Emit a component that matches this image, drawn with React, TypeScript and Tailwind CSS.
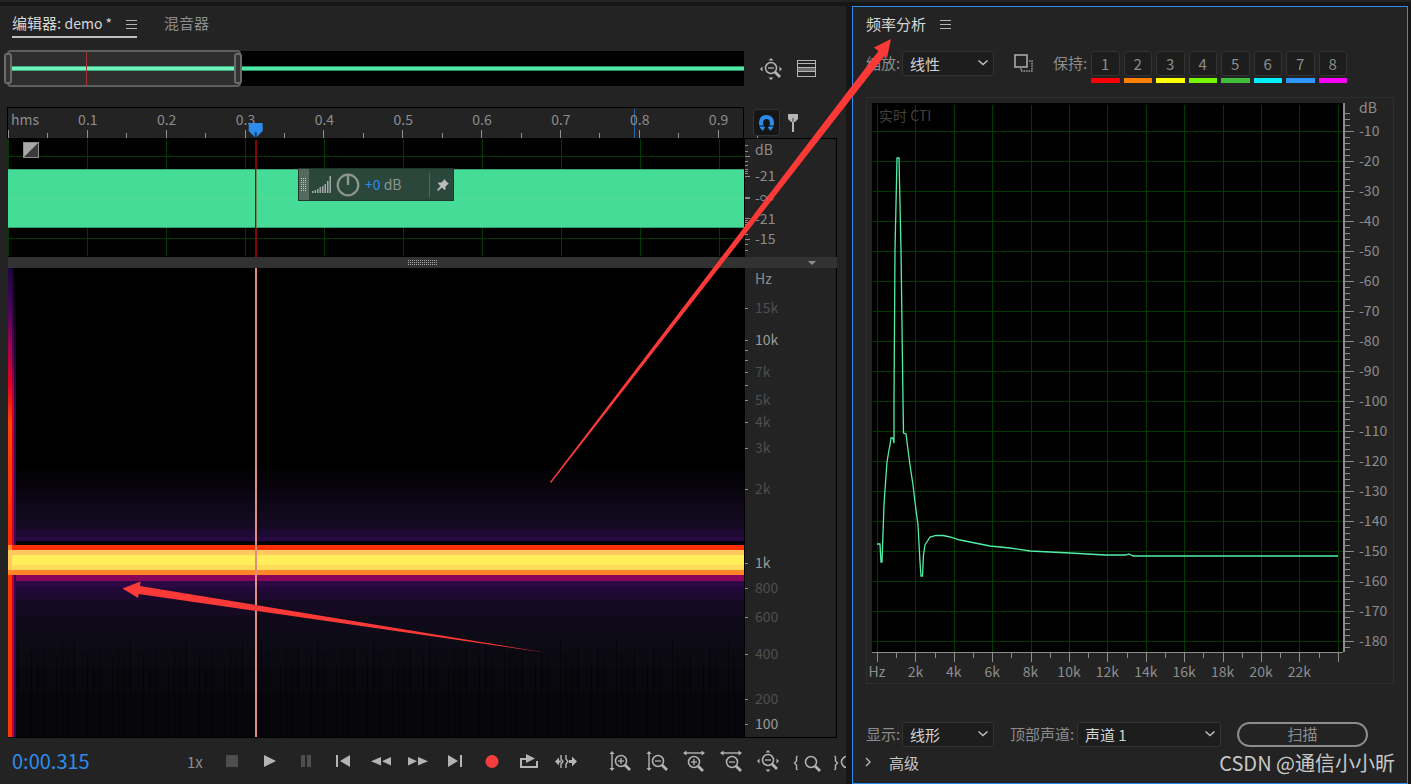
import React, { useState } from 'react';

const pct = (value: number, total: number) => `${(value / total) * 100}%`;
const range = (n: number) => Array.from({ length: n }, (_, i) => i);

const HOLDS = [
  { label: '1', color: 'bg-[#ff0000]' },
  { label: '2', color: 'bg-[#ff8000]' },
  { label: '3', color: 'bg-[#ffff00]' },
  { label: '4', color: 'bg-[#76f500]' },
  { label: '5', color: 'bg-[#40bf3a]' },
  { label: '6', color: 'bg-[#00f0ff]' },
  { label: '7', color: 'bg-[#2d96ff]' },
  { label: '8', color: 'bg-[#ff00ff]' },
];

const DB_MARKS = [
  { text: 'dB', y: 11 },
  { text: '-21', y: 37 },
  { text: '-∞', y: 59 },
  { text: '-21', y: 80 },
  { text: '-15', y: 100 },
];

const HZ_MARKS = [
  { text: 'Hz', y: 11, tone: 'fill-[#8c8c8c]' },
  { text: '15k', y: 40, tone: 'fill-[#4e4e4e]' },
  { text: '10k', y: 72, tone: 'fill-[#9a9a9a]' },
  { text: '7k', y: 104, tone: 'fill-[#4e4e4e]' },
  { text: '5k', y: 132, tone: 'fill-[#4e4e4e]' },
  { text: '4k', y: 154, tone: 'fill-[#4e4e4e]' },
  { text: '3k', y: 180, tone: 'fill-[#4e4e4e]' },
  { text: '2k', y: 221, tone: 'fill-[#4e4e4e]' },
  { text: '1k', y: 295, tone: 'fill-[#9a9a9a]' },
  { text: '800', y: 320, tone: 'fill-[#4e4e4e]' },
  { text: '600', y: 349, tone: 'fill-[#4e4e4e]' },
  { text: '400', y: 386, tone: 'fill-[#4e4e4e]' },
  { text: '200', y: 431, tone: 'fill-[#4e4e4e]' },
  { text: '100', y: 456, tone: 'fill-[#9a9a9a]' },
];

// [top, height, colour] in a 469 unit tall plot
const BANDS: [number, number, string][] = [
  [252, 9, '#150a22'],
  [261, 8, '#1d0a32'],
  [269, 4, '#280a42'],
  [273, 4, '#06030b'],
  [277, 5, '#ff3000'],
  [282, 5, '#ffc95f'],
  [287, 10, '#ffed5a'],
  [297, 5, '#ffdb5a'],
  [302, 5, '#ff8528'],
  [307, 6, '#88055a'],
  [313, 6, '#2c0846'],
  [319, 6, '#220838'],
  [325, 7, '#1c0a2e'],
  [332, 15, '#150a22'],
  [347, 16, '#0f0a1a'],
  [363, 18, '#0d0b15'],
  [381, 20, '#0b0a12'],
  [401, 22, '#09080e'],
  [423, 46, '#07060b'],
];

const SPECTRUM =
  'M5 441H8L9 459H10L12 402L13 387L15 359L17 347L18 342L19 335H21L22 340L22 297L23 147L25 55H27L29 147L31 297L31.500 330L34 331L36 347L38 362L41 382L43 399L46 422L48 459L49 473H50.500L51.500 452L53 442L58 434L64 432.300L71 432.500L78 434L88 437L103 440L118 443L138 445L158 448L178 449L198 450L233 452H254L257 451L261 453H466';

function MenuIcon() {
  return (
    <svg width="11" height="10" viewBox="0 0 11 10" className="fill-[#b4b4b4]">
      <path d="M0 0h11v1H0zM0 4h11v1H0zM0 8h11v1H0z" />
    </svg>
  );
}

interface IconProps {
  children: React.ReactNode;
  label: string;
}

function ToolButton({ children, label }: IconProps) {
  return (
    <button aria-label={label} className="flex h-8 w-[37px] shrink-0 items-center justify-center text-[#b4b4b4]">
      <svg width="24" height="24" viewBox="0 0 24 24" fill="currentColor" className="overflow-visible">
        {children}
      </svg>
    </button>
  );
}

function Lens({ x, y, sign }: { x: number; y: number; sign?: 'plus' | 'minus' }) {
  return (
    <g stroke="currentColor" fill="none">
      <circle cx={x} cy={y} r="5.500" strokeWidth="1.500" />
      <path d={`M${x + 4} ${y + 4}l5 5`} strokeWidth="2.800" />
      {sign && <path d={`M${x - 3} ${y}h6`} strokeWidth="1.300" />}
      {sign === 'plus' && <path d={`M${x} ${y - 3}v6`} strokeWidth="1.300" />}
    </g>
  );
}

function ZoomFull() {
  return (
    <>
      <Lens x={12} y={11} sign="minus" />
      <path d="M12 1l2.500 2.500h-5zM12 23l2.500-2.500h-5zM1 12l2.500-2.500v5zM23 12l-2.500-2.500v5z" />
    </>
  );
}

function VerticalSpan() {
  return (
    <>
      <path d="M3.300 4.500h1.400v15H3.300z" />
      <path d="M4 2l2.500 3h-5z" />
      <path d="M4 22l2.500-3h-5z" />
    </>
  );
}

function HorizontalSpan() {
  return (
    <>
      <path d="M4 3.300h16v1.400H4z" />
      <path d="M1 4l3.500-2.500v5z" />
      <path d="M23 4l-3.500-2.500v5z" />
    </>
  );
}

function Select({ id, options, width }: { id: string; options: string[]; width: string }) {
  return (
    <span className={`relative inline-flex ${width}`}>
      <select
        id={id}
        className="h-[25px] w-full appearance-none rounded-[3px] border border-[#333] bg-[#1d1d1d] pl-[7px] text-[15px] leading-[22px] text-[#d2d2d2]"
      >
        {options.map((o) => (
          <option key={o}>{o}</option>
        ))}
      </select>
      <svg width="10" height="6" viewBox="0 0 10 6" className="pointer-events-none absolute right-[6px] top-[9px]">
        <path d="M0.500 0.500L5 4.500L9.500 0.500" fill="none" stroke="#c0c0c0" strokeWidth="1.400" />
      </svg>
    </span>
  );
}

function Overview() {
  return (
    <div className="relative h-[35px] bg-black">
      <div className="absolute inset-x-0 top-[15px] h-[5px] border-y border-[#2a8f62] bg-[#4fe8a4]" />
      {/* Visible range */}
      <div className="absolute -left-px -top-px h-[37px] w-[31.800%] rounded-[4px] border-2 border-[#5f5f5f] bg-[#2e2e2e]">
        <div className="absolute inset-x-0 top-[14px] h-[5px] border-y border-[#3fae80] bg-[#70f2b8]" />
        <div className="absolute inset-y-0 left-1/3 w-px bg-[#a83030]" />
        <div className="absolute -left-[5px] top-px h-[31px] w-2 rounded-[3px] border-2 border-[#6a6a6a] bg-[#333]" />
        <div className="absolute -right-[3px] top-px h-[31px] w-2 rounded-[3px] border-2 border-[#6a6a6a] bg-[#333]" />
      </div>
    </div>
  );
}

function TimeRuler() {
  return (
    <svg className="block h-full w-full overflow-visible">
      <g shapeRendering="crispEdges" stroke="#909090">
        {range(10).map((i) => (
          <React.Fragment key={i}>
            <line x1={pct(i * 78.95 + 0.5, 736)} x2={pct(i * 78.95 + 0.5, 736)} y1="22" y2="30" />
            <line x1={pct(i * 78.95 + 40, 736)} x2={pct(i * 78.95 + 40, 736)} y1="25" y2="30" />
          </React.Fragment>
        ))}
        <line x1="85.200%" x2="85.200%" y1="1" y2="30" stroke="#2468a8" />
      </g>
      <g className="fill-[#8c8c8c] text-[14px]">
        <text x="3" y="17">hms</text>
        {range(9).map((i) => (
          <text key={i} x={pct((i + 1) * 78.95 + 1, 736)} y="17" textAnchor="middle">
            {`0.${i + 1}`}
          </text>
        ))}
      </g>
      <svg x="33.700%" y="15" width="16" height="16" className="overflow-visible">
        <path d="M-7 0h14v8l-6 6h-2l-6-6z" fill="#2d8ceb" />
        <path d="M0 9v5" stroke="#12406e" strokeWidth="2" />
      </svg>
    </svg>
  );
}

function GainHud() {
  return (
    <div className="absolute left-[39.4%] top-[29px] flex h-[33px] w-[156px] items-center border border-[#22382f] bg-[#2b473c]">
      <div className="flex h-full w-[10px] shrink-0 items-center justify-center bg-[#56695f]">
        <svg width="5" height="13" fill="none" stroke="#c4c4c4" strokeDasharray="1 1">
          <path d="M0.500 0v13M2.500 0v13M4.500 0v13" />
        </svg>
      </div>
      <svg width="20" height="19" viewBox="0 0 20 19" className="ml-[3px] fill-[#a2a9a5]">
        {[2, 3, 4, 6, 7, 9, 12, 17].map((h, i) => (
          <rect key={i} x={i * 2.5} y={18 - h} width="1.500" height={h} />
        ))}
      </svg>
      <svg width="24" height="24" viewBox="0 0 24 24" fill="none" stroke="#8e9692" strokeWidth="2.200" className="ml-1">
        <circle cx="12" cy="12" r="10.300" />
        <path d="M12 2v10" strokeWidth="2.400" />
      </svg>
      <span className="ml-[5px] pb-0.5 text-[14px] text-[#8a9690]">
        <span className="text-[#2d8ceb]">+0</span> dB
      </span>
      <span className="ml-auto h-6 w-px bg-[#54685f]" />
      <svg width="12" height="12" viewBox="0 0 12 12" className="ml-[7px] mr-[4px] shrink-0 fill-[#bcbcbc]">
        <path d="M7 0l5 5-1.500 0.500-2 2 0 3-1 0.500-2.500-2.500L1 12 0 11l3.500-4L1 4.500 1.500 3.500h3l2-2z" />
      </svg>
    </div>
  );
}

function Waveform() {
  return (
    <div className="relative h-full">
      <svg className="block h-full w-full bg-black" shapeRendering="crispEdges">
        <g stroke="#003a00">
          {range(10).map((i) => (
            <line key={i} x1={pct(i * 78.95 + 0.5, 736)} x2={pct(i * 78.95 + 0.5, 736)} y1="0" y2="117" />
          ))}
          <line x1="0" x2="100%" y1="17.500" y2="17.500" />
          <line x1="0" x2="100%" y1="99.500" y2="99.500" />
        </g>
        <rect x="0" y="30" width="100%" height="59" fill="#45dc98" />
        <rect x="0" y="30" width="100%" height="1" fill="#35a878" />
        <rect x="0" y="88" width="100%" height="1" fill="#2f9c6c" />
        <rect x="0" y="59" width="100%" height="1" fill="#55dc94" />
        <rect x="33.600%" y="1" width="2" height="117" fill="#8a0404" />
        <rect x="33.720%" y="30" width="1" height="59" fill="#6d8a5c" />
      </svg>
      <svg width="16" height="16" className="absolute left-[15px] top-[3px]">
        <rect x="0.500" y="0.500" width="15" height="15" fill="#3a3a3a" stroke="#8c8c8c" />
        <path d="M1 1h14L1 15z" fill="#a8a8a8" />
      </svg>
      <GainHud />
    </div>
  );
}

function DbScale() {
  return (
    <svg className="block h-full w-full text-[14px]">
      <g shapeRendering="crispEdges" fill="#8c8c8c">
        {[6, 12, 22, 26, 30, 32, 34, 81, 83, 85, 95, 105, 111].map((y) => (
          <rect key={y} x="0" y={y} width="3" height="1" />
        ))}
        {[17, 37, 79, 100].map((y) => (
          <rect key={y} x="0" y={y} width="5" height="1" />
        ))}
        <rect x="0" y="58" width="5" height="2" />
      </g>
      {DB_MARKS.map((m) => (
        <text key={m.y} x="10" y={m.y + 5} className="fill-[#8c8c8c]">
          {m.text}
        </text>
      ))}
    </svg>
  );
}

function Spectrogram() {
  return (
    <svg className="block h-full w-full bg-black" viewBox="0 0 736 469" preserveAspectRatio="none">
      <defs>
        <linearGradient id="haze" x1="0" y1="0" x2="0" y2="1">
          <stop offset="0" stopColor="#000" />
          <stop offset="1" stopColor="#130a20" />
        </linearGradient>
        <linearGradient id="edgeHot" x1="0" y1="0" x2="0" y2="1">
          <stop offset="0" stopColor="#1c0640" />
          <stop offset="0.150" stopColor="#4a0660" />
          <stop offset="0.280" stopColor="#a00050" />
          <stop offset="0.420" stopColor="#e00020" />
          <stop offset="0.560" stopColor="#ff4400" />
          <stop offset="1" stopColor="#ff2c00" />
        </linearGradient>
        <linearGradient id="edgeMid" x1="0" y1="0" x2="0" y2="1">
          <stop offset="0" stopColor="#10022a" />
          <stop offset="0.300" stopColor="#4a0650" />
          <stop offset="0.500" stopColor="#d00028" />
          <stop offset="1" stopColor="#c80030" />
        </linearGradient>
        <linearGradient id="edgeCool" x1="0" y1="0" x2="0" y2="1">
          <stop offset="0" stopColor="#000" />
          <stop offset="0.500" stopColor="#3c0850" />
          <stop offset="1" stopColor="#3c0850" />
        </linearGradient>
      </defs>
      <g shapeRendering="crispEdges">
        <rect x="0" y="197" width="736" height="55" fill="url(#haze)" />
        <rect x="0" y="0" width="4" height="469" fill="url(#edgeHot)" />
        {BANDS.map(([y, h, fill]) => (
          <rect key={y} x="0" y={y} width="736" height={h} fill={fill} />
        ))}
        {range(90).map((i) => (
          <rect key={i} x={10 + i * 8 + ((i * 5) % 7)} y={370 + ((i * 13) % 30)} width="1" height="99" fill="#000" opacity="0.450" />
        ))}
        <rect x="0" y="0" width="4" height="277" fill="url(#edgeHot)" />
        <rect x="4" y="0" width="2" height="277" fill="url(#edgeMid)" />
        <rect x="6" y="0" width="2" height="277" fill="url(#edgeCool)" />
        <rect x="0" y="277" width="4" height="30" fill="#ff8a30" />
        <rect x="0" y="282" width="4" height="20" fill="#ffc95f" />
        <rect x="0" y="307" width="4" height="162" fill="#ff3800" />
        <rect x="4" y="307" width="2" height="162" fill="#c80030" />
        <rect x="6" y="307" width="2" height="162" fill="#3c0850" />
        <rect x="247" y="0" width="2" height="469" fill="#e08c80" />
      </g>
    </svg>
  );
}

function HzScale() {
  return (
    <svg className="block h-full w-full text-[14px]">
      <g shapeRendering="crispEdges" fill="#8c8c8c">
        {[82, 92, 117, ...HZ_MARKS.slice(1).map((m) => m.y)].map((y) => (
          <rect key={y} x="0" y={pct(y, 469)} width="3" height="1" />
        ))}
      </g>
      {HZ_MARKS.map((m) => (
        <text key={m.text} x="10" y={pct(m.y, 469)} dy="5" className={m.tone}>
          {m.text}
        </text>
      ))}
    </svg>
  );
}

function Transport() {
  return (
    <div className="flex h-[46px] shrink-0 items-center overflow-hidden pl-3">
      <span className="w-[175px] shrink-0 text-[20px] text-[#2d8ceb]">0:00.315</span>
      <span className="w-[26px] shrink-0 text-[15px] text-[#8c8c8c]">1x</span>
      <ToolButton label="停止">
        <rect x="6" y="6" width="12" height="12" fill="#4e4e4e" />
      </ToolButton>
      <ToolButton label="播放">
        <path d="M7 6l12 6-12 6z" />
      </ToolButton>
      <ToolButton label="暂停">
        <path d="M7 6h4v12H7zM13 6h4v12h-4z" fill="#4e4e4e" />
      </ToolButton>
      <ToolButton label="移到上一个">
        <path d="M5 6h2v12H5zM19 6v12l-10-6z" />
      </ToolButton>
      <ToolButton label="快退">
        <path d="M13 8v8.500L3 12.200zM23 8v8.500l-9-4.300z" />
      </ToolButton>
      <ToolButton label="快进">
        <path d="M3 8v8.500l9-4.300zM13 8v8.500l10-4.300z" />
      </ToolButton>
      <ToolButton label="移到下一个">
        <path d="M6 6l10 6-10 6zM18 6h2v12h-2z" />
      </ToolButton>
      <ToolButton label="录制">
        <circle cx="13" cy="12.500" r="6.500" fill="#f53d3d" />
      </ToolButton>
      <ToolButton label="循环播放">
        <path d="M4 9h7v2H6v6h14v-5h2v7H4z" />
        <path d="M10 5l9 4.500-9 4.500z" />
      </ToolButton>
      <ToolButton label="跳过所选项目">
        <path d="M2 12.500l4-4v3h2v2H6v3z" />
        <path d="M24 12.500l-5-5v3.500h-3v3h3v3.500z" />
        <path d="M8 6v4l2 2.500-2 2.500v4M13 6v4l2 2.500-2 2.500v4" fill="none" stroke="currentColor" strokeWidth="1.400" />
      </ToolButton>
      <div className="ml-[18px] flex shrink-0">
        <ToolButton label="放大振幅">
          <Lens x={13} y={12} sign="plus" />
          <VerticalSpan />
        </ToolButton>
        <ToolButton label="缩小振幅">
          <Lens x={13} y={12} sign="minus" />
          <VerticalSpan />
        </ToolButton>
        <ToolButton label="放大时间">
          <Lens x={12} y={13} sign="plus" />
          <HorizontalSpan />
        </ToolButton>
        <ToolButton label="缩小时间">
          <Lens x={13} y={13} sign="minus" />
          <HorizontalSpan />
        </ToolButton>
        <ToolButton label="全部缩小">
          <ZoomFull />
        </ToolButton>
        <ToolButton label="放大入点">
          <Lens x={18} y={13} />
          <path d="M4.500 7l-1 1v4l-2 2 2 2v4l1 1" fill="none" stroke="currentColor" strokeWidth="1.400" />
        </ToolButton>
        <ToolButton label="放大出点">
          <path d="M4.500 7l1 1v4l2 2-2 2v4l-1 1" fill="none" stroke="currentColor" strokeWidth="1.400" />
          <Lens x={17} y={13} />
        </ToolButton>
      </div>
    </div>
  );
}

function EditorPanel() {
  return (
    <section className="flex min-h-0 min-w-0 flex-col overflow-hidden bg-[#232323]">
      <header className="flex h-8 shrink-0 pl-3 text-[15px]">
        <div className="flex items-center gap-[14px] border-b-2 border-[#c0c0c0] pt-[3px]">
          <button className="text-[#d8d8d8]">
            编辑器: <span className="text-[14px]">demo *</span>
          </button>
          <button aria-label="编辑器菜单" className="pt-1">
            <MenuIcon />
          </button>
        </div>
        <button className="ml-[27px] pt-px text-[#8c8c8c]">混音器</button>
      </header>

      <div className="mt-[13px] grid shrink-0 grid-cols-[1fr_93px] pl-2 pr-[9px]">
        <Overview />
        <div className="flex items-center gap-[14px] pl-[15px] text-[#b4b4b4]">
          <button aria-label="缩放导航">
            <svg width="24" height="24" viewBox="0 0 24 24" fill="currentColor">
              <ZoomFull />
            </svg>
          </button>
          <button aria-label="显示列表">
            <svg width="19" height="17" viewBox="0 0 19 17" fill="none" stroke="currentColor" shapeRendering="crispEdges">
              <path d="M1 8h17v3H1z" fill="#6a6a6a" stroke="none" />
              <rect x="0.500" y="0.500" width="18" height="16" />
              <path d="M1 3.500h17M1 7.500h17M1 11.500h17" />
            </svg>
          </button>
        </div>
      </div>

      <div className="mt-[21px] grid min-h-0 flex-1 grid-cols-[1fr_93px] grid-rows-[32px_118px_11px_1fr] pl-2 pr-[9px]">
        <div className="border-t border-r border-b border-black shadow-[-1px_0_0_#000]">
          <TimeRuler />
        </div>
        <div className="flex items-center gap-[8px] border-b border-black pl-[9px]">
          <button aria-label="对齐" className="flex h-[27px] w-[27px] items-center justify-center rounded-[3px] border border-[#333] bg-[#161616]">
            <svg width="17" height="17" viewBox="0 0 17 17" fill="none" stroke="#2d8ceb" strokeWidth="4">
              <path d="M6 15C1.500 12 2 3 8.500 3s7 9 2.500 12" />
              <path d="M1 12h6M10 12h6" stroke="#161616" strokeWidth="1" />
            </svg>
          </button>
          <button aria-label="添加标记">
            <svg width="10" height="18" viewBox="0 0 10 18" fill="#b4b4b4">
              <path d="M0 0h10v5L7 8H3L0 5zM4 8h2v10H4z" />
              <path d="M5 4v4" stroke="#444" />
            </svg>
          </button>
        </div>

        <Waveform />
        <div className="border-l border-r border-black">
          <DbScale />
        </div>

        <div className="col-span-2 grid grid-cols-[1fr_auto_1fr] items-center bg-[#323232]">
          <svg width="29" height="5" className="col-start-2" fill="none" stroke="#a8a8a8" strokeDasharray="1 1">
            <path d="M0 0.500h29M0 2.500h29M0 4.500h29" />
          </svg>
          <svg width="8" height="4" className="mr-[21px] justify-self-end fill-[#8c8c8c]">
            <path d="M0 0h8L4 4z" />
          </svg>
        </div>

        <div className="min-h-0 border-b border-black">
          <Spectrogram />
        </div>
        <div className="min-h-0 border-b border-l border-r border-black">
          <HzScale />
        </div>
      </div>

      <Transport />
    </section>
  );
}

function FrequencyChart() {
  return (
    <div className="mx-[13px] mt-[14px] grid min-h-0 flex-1 grid-cols-[1fr_50px] grid-rows-[1fr_31px] border border-[#2e2e2e] pl-[5px] pt-[5px]">
      <svg className="block h-full w-full bg-black">
        <g stroke="#003a00" shapeRendering="crispEdges">
          {range(13).map((i) => (
            <line key={i} x1={pct(5.5 + i * 38.4, 471)} x2={pct(5.5 + i * 38.4, 471)} y1="2" y2="100%" />
          ))}
          {range(18).map((i) => (
            <line key={i} x1="1" x2="100%" y1={pct(28.5 + i * 30, 549)} y2={pct(28.5 + i * 30, 549)} />
          ))}
        </g>
        <text x="7" y="18" className="fill-[#404040] text-[14px]">实时 CTI</text>
        <svg width="100%" height="100%" viewBox="0 0 471 549" preserveAspectRatio="none">
          <path d={SPECTRUM} fill="none" stroke="#52eea8" strokeWidth="1.300" />
        </svg>
      </svg>

      {/* Level axis */}
      <svg className="block h-full w-full overflow-visible text-[14px]">
        <g fill="#8c8c8c" shapeRendering="crispEdges">
          <rect x="0" y="0" width="2" height="100%" />
          {range(90).map((i) => (
            <rect key={i} x="2" y={pct(10 + i * 6, 549)} width={i % 5 === 3 ? 9 : 5} height="1" />
          ))}
        </g>
        <text x="16" y="10" className="fill-[#8c8c8c]">dB</text>
        {range(18).map((i) => (
          <text key={i} x="16" y={pct(28 + i * 30, 549)} dy="5" className="fill-[#8c8c8c]">
            {`-${(i + 1) * 10}`}
          </text>
        ))}
      </svg>

      {/* Frequency axis */}
      <svg className="block h-full w-full overflow-visible text-[14px]">
        <g fill="#8c8c8c" shapeRendering="crispEdges">
          <rect x="0" y="0" width="100%" height="1" />
          {range(25).map((i) => (
            <rect key={i} x={pct(5 + i * 19.2, 471)} y="1" width="1" height={i % 2 ? 5 : 9} />
          ))}
        </g>
        {range(12).map((i) => (
          <text key={i} x={pct(5 + i * 38.4, 471)} y="25" textAnchor="middle" className="fill-[#8c8c8c]">
            {i === 0 ? 'Hz' : `${i * 2}k`}
          </text>
        ))}
      </svg>
    </div>
  );
}

function FrequencyPanel() {
  const [hold, setHold] = useState<string | null>(null);

  return (
    <section className="flex min-h-0 min-w-0 flex-col border border-[#2d8ceb] bg-[#232323] text-[15px]">
      <header className="flex h-8 shrink-0 items-center gap-[14px] pl-[13px] text-[#d8d8d8]">
        <h2>频率分析</h2>
        <button aria-label="频率分析菜单" className="pt-1">
          <MenuIcon />
        </button>
      </header>

      <div className="mt-3 flex h-8 shrink-0 items-start pl-[13px] leading-[23px] text-[#8c8c8c]">
        <label htmlFor="scale" className="w-9 whitespace-nowrap">缩放:</label>
        <Select id="scale" options={['线性', '对数']} width="w-[92px]" />
        <button aria-label="复制全部图表" className="ml-5 mt-[3px]">
          <svg width="19" height="18" viewBox="0 0 19 18" fill="none">
            <path d="M15 7h3v10H7v-3" stroke="#a0a0a0" strokeWidth="1.500" strokeDasharray="1.500 1" />
            <rect x="1" y="1" width="12" height="12" stroke="#a8a8a8" strokeWidth="1.600" />
          </svg>
        </button>
        <span className="ml-5 w-[38px] whitespace-nowrap">保持:</span>
        <div className="grid w-64 grid-cols-8 gap-1">
          {HOLDS.map((h) => (
            <button key={h.label} onClick={() => setHold(hold === h.label ? null : h.label)}>
              <span className="block h-[25px] rounded-[3px] border border-[#333] bg-[#1d1d1d]">{h.label}</span>
              <span className={`mt-0.5 block h-[5px] ${h.color}`} />
            </button>
          ))}
        </div>
      </div>

      <FrequencyChart />

      <div className="mt-[38px] flex h-[25px] shrink-0 items-start whitespace-nowrap pl-[13px] leading-[23px] text-[#8c8c8c]">
        <label htmlFor="display" className="w-9">显示:</label>
        <Select id="display" options={['线形', '条形', '区域']} width="w-[92px]" />
        <label htmlFor="channel" className="ml-4 w-[67px]">顶部声道:</label>
        <Select id="channel" options={['声道 1']} width="w-36" />
        <button className="ml-4 h-[25px] w-[131px] rounded-full border-2 border-[#8c8c8c] pb-0.5 leading-[19px]">扫描</button>
      </div>
      <div className="mb-1 flex h-8 shrink-0 items-center justify-between pl-3 pr-3">
        <button className="flex items-center gap-[18px] pb-0.5 text-[#c8c8c8]">
          <svg width="6" height="10" viewBox="0 0 6 10" fill="none" stroke="#b4b4b4" strokeWidth="1.400">
            <path d="M1 1l4 4-4 4" />
          </svg>
          高级
        </button>
        <span className="text-[20px] text-[#c8c8c8]">CSDN @通信小小昕</span>
      </div>
    </section>
  );
}

function Arrows() {
  return (
    <svg
      className="pointer-events-none absolute inset-0 h-full w-full fill-[#fb3a38]"
      viewBox="0 0 1411 784"
      preserveAspectRatio="none"
    >
      <path d="M550 482L878.500 51 874 47.500 891 39 887 58 884.500 56 551 483z" />
      <path d="M548 653L140 586 140.500 581.500 122.500 588.500 138 598 138.700 594z" />
    </svg>
  );
}

export default function App() {
  return (
    <div className="relative flex h-screen flex-col overflow-hidden bg-[#161616] font-['Noto_Sans_CJK_SC',sans-serif] leading-none">
      <div className="h-0.5 shrink-0 bg-[#232323]" />
      <main className="grid min-h-0 flex-1 grid-cols-[846fr_556fr] grid-rows-[minmax(0,1fr)] gap-[6px] pr-[3px] pt-1">
        <EditorPanel />
        <FrequencyPanel />
      </main>
      <Arrows />
    </div>
  );
}
